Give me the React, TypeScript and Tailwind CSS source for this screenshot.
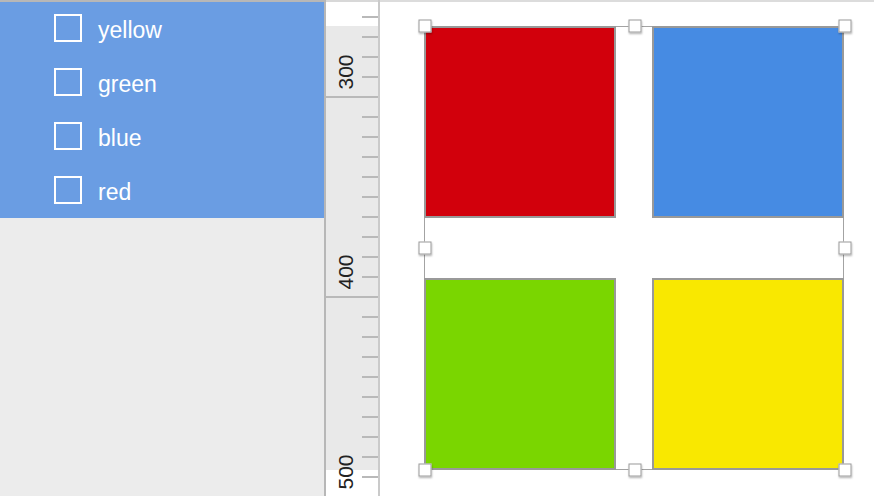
import React from "react";

const layers = ["yellow", "green", "blue", "red"];

// ruler ticks every 20px, a major line every 200px
const ticks = Array.from({ length: 25 }, (_, i) => 16 + i * 20);
const labels = [
  { text: "300", y: 72 },
  { text: "400", y: 272 },
  { text: "500", y: 472 },
];

const squares = [
  { id: "red", left: 44, top: 26, color: "bg-[#d2000c]" },
  { id: "blue", left: 272, top: 26, color: "bg-[#468be3]" },
  { id: "green", left: 44, top: 278, color: "bg-[#7ad600]" },
  { id: "yellow", left: 272, top: 278, color: "bg-[#f9e800]" },
];

const handles = [
  [44, 26], [254, 26], [464, 26],
  [44, 248], [464, 248],
  [44, 470], [254, 470], [464, 470],
];

const Checkbox = () => (
  <div className="h-[28px] w-[28px] shrink-0 border-2 border-white" />
);

const Ruler = () => (
  <div className="relative flex w-[54px] shrink-0 flex-col border-r-2 border-[#cacaca]">
    <div className="h-[2px] bg-[#d8d8d8]" />
    <div className="h-[24px] bg-white" />
    <div className="flex-1 bg-[#e9e9e9]" />
    <div className="h-[26px] bg-white" />

    {ticks.map((y) => (
      <div
        key={y}
        className={
          (y - 96) % 200 === 0
            ? "absolute left-0 right-0 h-[2px] bg-[#b9b9b9]"
            : "absolute right-0 w-[16px] h-[2px] bg-[#b9b9b9]"
        }
        style={{ top: y }}
      />
    ))}

    {labels.map((l) => (
      <span
        key={l.text}
        className="absolute left-[19px] -translate-x-1/2 -translate-y-1/2 -rotate-90 text-[21px] leading-none text-[#222]"
        style={{ top: l.y }}
      >
        {l.text}
      </span>
    ))}
  </div>
);

export default function App() {
  return (
    <div className="flex h-[496px] w-[874px] overflow-hidden bg-white font-['Liberation_Sans',Arial,sans-serif]">
      {/* Layers panel */}
      <div className="flex w-[326px] shrink-0 flex-col border-t-2 border-r-2 border-[#b7b7b7] bg-[#ececec]">
        <div className="flex flex-col bg-[#6a9de3]">
          {layers.map((name) => (
            <div key={name} className="flex h-[54px] items-start gap-4 pl-[54px] pt-[12px]">
              <Checkbox />
              <span className="mt-[2px] text-[23px] leading-[28px] text-white">{name}</span>
            </div>
          ))}
        </div>
      </div>

      <Ruler />

      {/* Canvas */}
      <div className="relative flex-1 bg-white">
        <div className="h-[2px] bg-[#dcdcdc]" />

        {/* selection outline */}
        <div className="absolute left-[44px] top-[26px] h-[444px] w-[420px] border border-[#a3a3a3]" />

        {squares.map((s) => (
          <div
            key={s.id}
            className={`absolute h-[192px] w-[192px] border-2 border-[#999] ${s.color}`}
            style={{ left: s.left, top: s.top }}
          />
        ))}

        {handles.map(([x, y], i) => (
          <div
            key={i}
            className="absolute h-[13px] w-[13px] -translate-x-1/2 -translate-y-1/2 border border-[#9a9a9a] bg-white shadow-[0_1px_2px_rgba(0,0,0,0.3)]"
            style={{ left: x + 0.5, top: y }}
          />
        ))}
      </div>
    </div>
  );
}
